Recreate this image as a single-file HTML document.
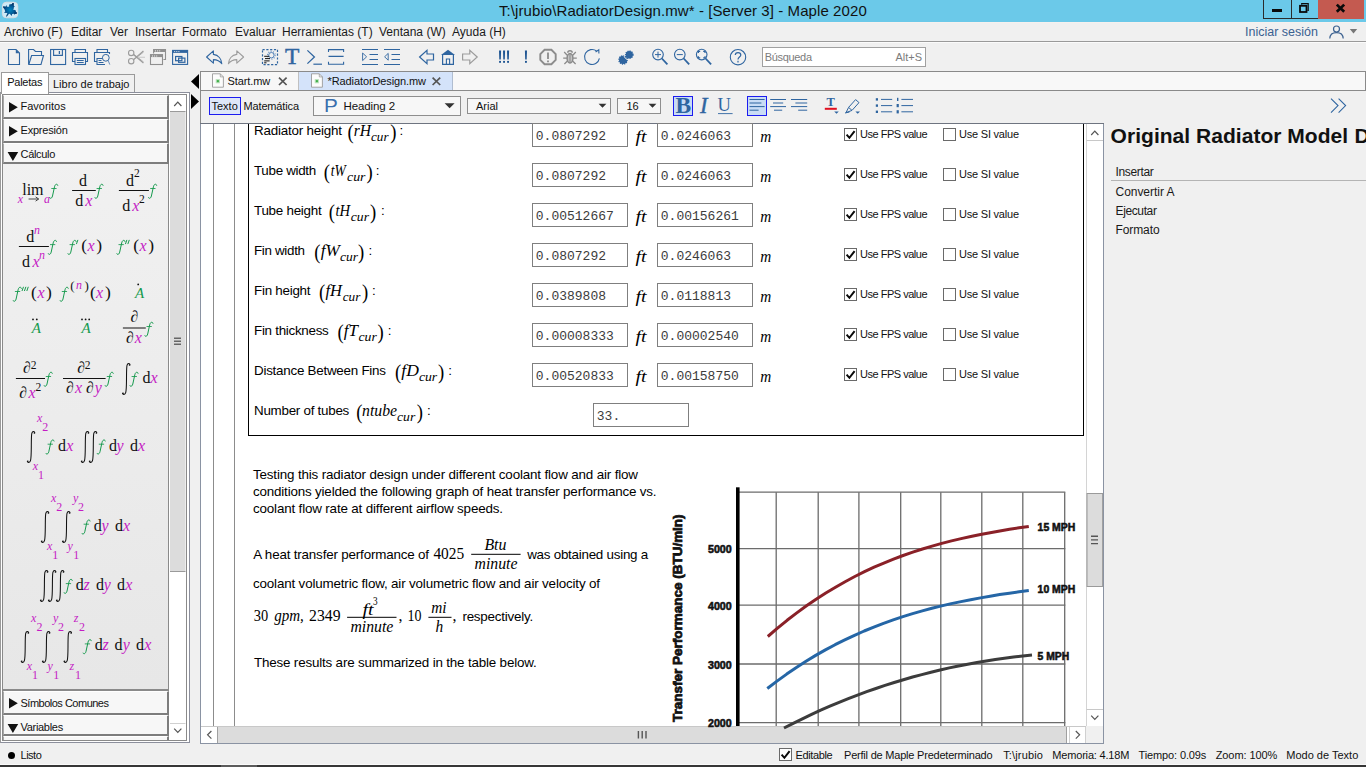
<!DOCTYPE html>
<html><head><meta charset="utf-8"><title>Maple 2020</title>
<style>
*{box-sizing:border-box;margin:0;padding:0}
html,body{width:1366px;height:767px;overflow:hidden;background:#f0f0f0;font-family:"Liberation Sans",sans-serif;}
#app{position:relative;width:1366px;height:767px;overflow:hidden;background:#f0f0f0}
.a{position:absolute}
.t{position:absolute;white-space:pre;line-height:1;color:#000}
.ui{font-size:12px;color:#1a1a1a}
svg{position:absolute;overflow:visible}
.ser{font-family:"Liberation Serif",serif}
.mono{font-family:"Liberation Mono",monospace}
.it{font-style:italic}
</style></head><body><div id="app">

<!-- TITLE BAR -->
<div class="a" id="titlebar" style="left:0;top:0;width:1366px;height:22px;background:#6bc9e9"></div>
<div class="t" style="left:499px;top:3px;font-size:15px;letter-spacing:0.08px;color:#111">T:\jrubio\RadiatorDesign.mw* - [Server 3] - Maple 2020</div>
<svg style="left:0;top:0" width="22" height="22" viewBox="0 0 22 22">
 <defs><radialGradient id="lg" cx="10" cy="10" r="7.5" gradientUnits="userSpaceOnUse"><stop offset="0" stop-color="#0086bf"/><stop offset="0.55" stop-color="#045a96"/><stop offset="1" stop-color="#00285a"/></radialGradient></defs>
 <rect x="2.4" y="2.2" width="15.4" height="15.6" rx="4" fill="#cdeaf7" stroke="#e3dcdc" stroke-width="0.8"/>
 <path d="M12.8 3.0 L13.8 3.0 L13.9 5.9 L14.9 6.4 L13.8 7.2 L13.8 8.6 L13.0 9.4 L15.6 10.2 L16.0 12.1 L17.1 12.5 L16.9 13.8 L15.0 14.1 L14.6 14.7 L13.8 13.8 L12.1 14.1 L11.7 16.0 L10.6 14.7 L9.9 13.8 L8.8 14.1 L6.7 16.7 L6.1 16.3 L7.4 13.1 L4.1 12.7 L4.7 12.1 L5.3 11.6 L4.4 9.1 L3.1 7.5 L3.1 6.3 L5.8 6.6 L6.3 5.0 L7.0 6.7 L9.1 6.7 L9.2 4.4 L12.1 4.1 L12.2 3.1 Z" fill="url(#lg)"/>
</svg>
<!-- window buttons -->
<div class="a" style="left:1263px;top:0;width:29px;height:19px;border:1px solid #2b2b2b;border-top:none;background:#6bc9e9"></div>
<div class="a" style="left:1291px;top:0;width:27px;height:19px;border:1px solid #2b2b2b;border-top:none;border-right:none;background:#6bc9e9"></div>
<div class="a" style="left:1317.5px;top:0;width:46.5px;height:18.6px;background:#c45a50"></div>

<!-- MENU BAR -->
<div class="a" style="left:0;top:22px;width:1366px;height:19px;background:#f0f0f0;border-top:1px solid #f6f1ef"></div>
<div class="a" style="left:0;top:41px;width:1366px;height:1px;background:#9a9a9a"></div>
<div class="a" style="left:0;top:42px;width:1366px;height:1px;background:#fbfbfb"></div>
<!-- menus -->
<div class="t ui" style="left:4px;top:26px">Archivo (F)</div>
<div class="t ui" style="left:71px;top:26px">Editar</div>
<div class="t ui" style="left:110px;top:26px">Ver</div>
<div class="t ui" style="left:135px;top:26px">Insertar</div>
<div class="t ui" style="left:182px;top:26px">Formato</div>
<div class="t ui" style="left:235px;top:26px">Evaluar</div>
<div class="t ui" style="left:282px;top:26px">Herramientas (T)</div>
<div class="t ui" style="left:379px;top:26px">Ventana (W)</div>
<div class="t ui" style="left:452px;top:26px">Ayuda (H)</div>
<div class="t" style="left:1245px;top:26px;font-size:12.5px;color:#3b6190">Iniciar sesión</div>
<svg style="left:1326px;top:24px" width="36" height="16" viewBox="1326 24 36 16">
 <circle cx="1336.5" cy="29" r="3" fill="none" stroke="#3b6190" stroke-width="1.2"/>
 <path d="M1329.8 38.5 C1330 33.5 1333.5 32.6 1336.5 32.6 C1339.5 32.6 1343 33.5 1343.2 38.5" fill="none" stroke="#3b6190" stroke-width="1.2"/>
 <path d="M1349.8 29 H1357.2 L1353.5 33.6 Z" fill="#777"/>
</svg>
<!-- window control glyphs -->
<div class="a" style="left:1272px;top:8.8px;width:10.2px;height:3.2px;background:#0a0a0a"></div>
<svg style="left:1297px;top:2px" width="16" height="13" viewBox="1297 2 16 13">
 <path d="M1301.7 4.8 V3.7 H1308.2 V10.4 H1307.4" fill="none" stroke="#0a0a0a" stroke-width="1.2"/>
 <rect x="1300" y="5.8" width="6.5" height="6.2" fill="none" stroke="#0a0a0a" stroke-width="1.8"/>
</svg>
<svg style="left:1334px;top:3px" width="14" height="11" viewBox="1334 3 14 11">
 <path d="M1336.8 4.6 L1344.2 11.8 M1344.2 4.6 L1336.8 11.8" stroke="#0a0a0a" stroke-width="2.7" fill="none"/>
</svg>
<!-- toolbar -->
<svg style="left:0;top:44px" width="1366" height="27" viewBox="0 44 1366 27" fill="none" stroke="#2f65a0" stroke-width="1.1">
 <!-- new -->
 <path d="M8.5 49.5 H16 L19.5 53 V64.5 H8.5 Z"/><path d="M15.8 49.5 L19.5 53.2 H15.8 Z" fill="#2f65a0" stroke="none"/>
 <!-- open -->
 <path d="M28.6 64 V49.5 H33.5 L35.5 51.5 H41.5 V55.2"/><path d="M28.8 64.5 L31.6 55.5 H43.5 L41 64.5 Z"/>
 <!-- save -->
 <rect x="50.6" y="49.5" width="15" height="15"/><path d="M53.6 49.5 V55.4 H62.4 V49.5"/><path d="M59.4 51 V54" stroke-width="1.3"/>
 <!-- print -->
 <path d="M75 52.5 V49.5 H85.5 V52.5"/><path d="M75 61.5 H72.5 V52.5 H87.5 V61.5 H85.5"/><rect x="75" y="58.5" width="10.5" height="6"/><path d="M76.8 60.5 H83.7 M76.8 62.5 H83.7" stroke-width="1"/>
 <!-- preview -->
 <path d="M97 52.5 V49.5 H107.5 V52.5"/><path d="M97 61.5 H94.5 V52.5 H109.5 V54"/><path d="M105 64.5 H97 V58.5 H102"/><path d="M98.5 60.5 H101.5 M98.5 62.5 H103.5" stroke-width="1"/>
 <circle cx="105.8" cy="57.8" r="3.4" fill="#f0f0f0" stroke-width="1"/><path d="M108.2 60.5 L109.8 64.6" stroke-width="1" stroke="#6a8fbd"/>
 <!-- cut (gray) -->
 <g stroke="#9c9c9c" stroke-width="1.1">
  <circle cx="131.2" cy="52.9" r="2.7"/><circle cx="131.2" cy="61.2" r="2.7"/>
  <path d="M133.4 54.5 L143.4 63 M133.4 59.6 L143.4 51"/><path d="M133.8 54.2 L143.6 62 M133.8 59.9 L143.6 52" stroke-width="0.7"/>
  <path d="M139.5 57.2 H144.5" stroke-dasharray="1 1"/>
 </g>
 <!-- copy (gray) -->
 <g stroke="#8f8f8f" stroke-width="1.1">
  <path d="M153.6 53.6 V49.6 H165.5 V59.5 H163.4"/><path d="M153.6 50.8 H165.5" stroke-width="2.4"/>
  <rect x="150.5" y="54.6" width="12" height="9.9"/><path d="M150.5 55.9 H162.5" stroke-width="2.4"/>
  <path d="M155 50.9 H160.4 M152 56 H157.4" stroke="#f0f0f0" stroke-width="1" stroke-dasharray="1 1.1"/>
 </g>
 <!-- paste -->
 <rect x="172.6" y="50.4" width="15" height="14"/><path d="M172.6 51.6 H187.6" stroke-width="2.6"/>
 <rect x="175.6" y="56.5" width="6.3" height="4.2" stroke-width="1.2"/><rect x="178.6" y="58.1" width="6.3" height="4.2" stroke-width="1.2"/>
 <path d="M174.2 51.6 H179.6" stroke="#f0f0f0" stroke-width="1" stroke-dasharray="1 1.1"/>
 <!-- undo -->
 <path d="M206.6 57 L213.4 50.8 V54.4 C218.5 55 221.5 59 221.8 63.8 C219.8 61 217.5 59.7 213.4 59.6 V63.2 Z" stroke-linejoin="round"/>
 <!-- redo gray -->
 <path d="M243.6 57 L236.8 50.8 V54.4 C231.7 55 228.7 59 228.4 63.8 C230.4 61 232.7 59.7 236.8 59.6 V63.2 Z" stroke="#9c9c9c" stroke-linejoin="round"/>
 <!-- exec group -->
 <rect x="262.5" y="49.6" width="15" height="15" stroke-dasharray="2.2 1.6" stroke-width="1.2"/>
 <circle cx="271.4" cy="55.2" r="2.7" stroke-width="1" stroke="#4f80b8"/><circle cx="271.4" cy="55.2" r="3.9" stroke-width="1.1" stroke="#5a88bd" stroke-dasharray="1 1.45"/>
 <path d="M264.2 56.3 H269.2 M265 58.6 H270 M264.2 60.9 H269.6 M264.2 62.8 H266.5" stroke="#111" stroke-width="1"/>
 <!-- >_ -->
 <path d="M307.4 50.4 L314.4 57 L307.4 63.6" stroke-width="1.3"/><path d="M313.4 64.2 H322" stroke-width="1.2"/>
 <!-- section -->
 <path d="M328.5 52 V49.6 H343.6 V52 M328.5 56.4 H343.6 M328.5 61.8 V64.2 H343.6 V61.8"/>
 <!-- indent -->
 <path d="M362 49.5 H378 M369.5 54.5 H378 M369.5 59.5 H378 M362 64.5 H378"/><path d="M362.6 53 L366.6 56.8 L362.6 60.6 Z" stroke-width="0.9"/>
 <!-- outdent -->
 <path d="M384 49.5 H400 M391.5 54.5 H400 M391.5 59.5 H400 M384 64.5 H400"/><path d="M388.2 53.4 L384.6 56.8 L388.2 60.2 Z" stroke-width="0.9"/>
 <!-- back -->
 <path d="M419.6 57 L427 50.4 V54 H433.5 V60 H427 V63.6 Z" stroke-width="1.2"/>
 <!-- home -->
 <path d="M441 55 L448 49.8 L455 55 Z" fill="#2f65a0" stroke="none"/><path d="M442.6 54.5 V64.4 H453.4 V54.5" stroke-width="1.2"/><path d="M446.4 64.4 V59 H449.6 V64.4" stroke-width="1.1"/>
 <!-- forward gray -->
 <path d="M477.2 57 L469.8 50.4 V54 H462.6 V60 H469.8 V63.6 Z" stroke="#9c9c9c" stroke-width="1.2"/>
 <!-- !!! -->
 <g fill="#1f5592" stroke="none">
  <path d="M499 50.6 h2.1 l-0.3 8.9 h-1.5 Z M503 50.6 h2.1 l-0.3 8.9 h-1.5 Z M507 50.6 h2.1 l-0.3 8.9 h-1.5 Z"/>
  <rect x="499.1" y="60.9" width="1.9" height="1.9"/><rect x="503.1" y="60.9" width="1.9" height="1.9"/><rect x="507.1" y="60.9" width="1.9" height="1.9"/>
  <path d="M524.9 50.6 h2.1 l-0.3 8.9 h-1.5 Z"/><rect x="525" y="60.9" width="1.9" height="1.9"/>
 </g>
 <!-- octagon -->
 <path d="M544.6 49.8 H551.4 L555.7 54.2 V59.8 L551.4 64.2 H544.6 L540.3 59.8 V54.2 Z" stroke="#8c8c8c" stroke-width="1.9"/>
 <path d="M548 52.6 V59 M548 60.4 V62.2" stroke="#8c8c8c" stroke-width="1.8"/>
 <!-- bug -->
 <g stroke="#8a8a8a" stroke-width="1.25">
  <ellipse cx="570" cy="58.2" rx="2.9" ry="4.7" stroke-width="1.5" fill="#c4c4c4"/><path d="M570 54 V62.6" stroke-width="1"/>
  <path d="M567.8 52.8 C567.8 50 572.2 50 572.2 52.8" stroke-width="1.5"/>
  <path d="M567.2 55.2 L564.2 52 M572.8 55.2 L575.8 52 M566.9 58.2 H563.2 M573.1 58.2 H576.8 M567.4 61 L564.4 64 M572.6 61 L575.6 64"/>
 </g>
 <!-- refresh -->
 <path d="M596.6 51 A7.5 7.5 0 1 0 599.4 58.4" stroke-width="1.1"/><path d="M595.6 52 L598.8 49.7 L598.9 53.4" stroke-width="1.1"/>
 <!-- gears -->
 <circle cx="623.1" cy="59.9" r="4.1" fill="#2f65a0" stroke="#2f65a0" stroke-width="1.5" stroke-dasharray="1.1 1"/>
 <circle cx="629.3" cy="54.7" r="5.3" fill="none" stroke="#f0f0f0" stroke-width="1"/>
 <circle cx="629.3" cy="54.7" r="3.6" fill="#2f65a0" stroke="#2f65a0" stroke-width="1.5" stroke-dasharray="1.1 1"/>
 <!-- zoom in -->
 <circle cx="658" cy="54.6" r="5.3"/><path d="M661.9 58.5 L667.4 64.4" stroke-width="1.8"/><path d="M655 54.6 H661 M658 51.6 V57.6" stroke-width="1"/>
 <!-- zoom out -->
 <circle cx="679.8" cy="54.6" r="5.3"/><path d="M683.7 58.5 L689.2 64.4" stroke-width="1.8"/><path d="M676.8 54.6 H682.8" stroke-width="1"/>
 <!-- zoom fit -->
 <circle cx="701.7" cy="54.6" r="5.3"/><path d="M705.6 58.5 L711.1 64.4" stroke-width="1.8"/>
 <path d="M698.4 53 V51.4 H700.2 M703.2 51.4 H705 V53 M698.4 56.2 V57.8 H700.2 M703.2 57.8 H705 V56.2" stroke-width="1.2"/>
 <!-- help -->
 <circle cx="738" cy="57.2" r="7.7"/>
 <path d="M735.3 55 C735.3 51.8 740.8 51.8 740.8 55 C740.8 57 738 57.2 738 59.4 M738 60.8 V62.4" stroke-width="1.2"/>
</svg>
<div class="t ser" style="left:284.6px;top:46px;font-size:22.8px;color:#2f65a0;-webkit-text-stroke:0.45px #2f65a0;transform:scaleX(1.03);transform-origin:0 0">T</div>
<!-- search box -->
<div class="a" style="left:762px;top:47px;width:164px;height:20px;background:#fff;border:1px solid #a0a0a0"></div>
<div class="t" style="left:764.8px;top:51.6px;font-size:11px;color:#7c7c7c;letter-spacing:-0.33px">Búsqueda</div>
<div class="t" style="left:895.5px;top:51.6px;font-size:11px;color:#7c7c7c">Alt+S</div>
<!-- LEFT PANEL -->
<!-- tabs -->
<div class="a" style="left:48px;top:74px;width:87px;height:19px;background:#f0f0f0;border:1px solid #9a9a9a;border-bottom:none"></div>
<div class="a" style="left:0;top:92px;width:190px;height:651px;border:1px solid #8c8f9c;border-left:1px solid #9a9a9a;background:#fff"></div>
<div class="a" style="left:1px;top:72px;width:48px;height:22px;background:#fff;border:1px solid #9a9a9a;border-bottom:none"></div>
<div class="t" style="left:7.2px;top:77px;font-size:11px;letter-spacing:-0.25px;color:#111">Paletas</div>
<div class="t" style="left:53px;top:79.3px;font-size:11px;color:#111">Libro de trabajo</div>
<!-- inner frame -->
<div class="a" style="left:2px;top:94px;width:185px;height:647px;border:1px solid #8a8a8a;background:#fff;overflow:hidden"></div>
<!-- palette content -->
<div class="a" style="left:3px;top:95px;width:166px;height:645px;background:linear-gradient(#f2f2f2,#e6e6e6);border-right:1px solid #8a8a8a"></div>
<!-- headers -->
<div class="a ph" style="top:95px"></div>
<div class="a ph" style="top:119px"></div>
<div class="a ph" style="top:143px;height:21px"></div>
<div class="a ph" style="top:691px"></div>
<div class="a ph" style="top:715px;height:21px"></div>
<div class="a ph" style="top:736px;height:4px;border-bottom:none"></div>
<style>.ph{left:3px;width:166px;height:24px;background:#f7f7f7;border:1px solid #fff;border-right:2px solid #7d7d7d;border-bottom:2px solid #7d7d7d;border-left:1px solid #a8a8a8}
.pt{font-size:11px;color:#111}</style>
<div class="a" style="left:3px;top:689px;width:166px;height:2px;background:#8a8a8a"></div>
<svg style="left:0;top:90px" width="200" height="660" viewBox="0 90 200 660">
 <path d="M9 102 L17.8 107.3 L9 112.6 Z M9 126 L17.8 131.3 L9 136.6 Z M9 698 L17.8 703.3 L9 708.6 Z" fill="#111"/>
 <path d="M7.6 152 H18.2 L12.9 161 Z M7.6 724 H18.2 L12.9 733 Z" fill="#111"/>
 <!-- scrollbar -->
 <rect x="170" y="95" width="16" height="645" fill="#fff"/>
 <rect x="170" y="111.5" width="15.5" height="460" fill="#dcdcdc"/>
 <path d="M170 111.5 H185.5 M170 571.5 H185.5" stroke="#9a9a9a" stroke-width="1"/>
 <path d="M174 338.2 H181 M174 341.2 H181 M174 344.2 H181" stroke="#666" stroke-width="1.4"/>
 <path d="M174.2 106 L177.8 102.2 L181.4 106" fill="none" stroke="#555" stroke-width="1.2"/>
 <path d="M174.2 728.6 L177.8 732.4 L181.4 728.6" fill="none" stroke="#555" stroke-width="1.2"/>
 <path d="M170 723.5 H185.5" stroke="#d0d0d0" stroke-width="1"/>
 <!-- collapse arrows -->
 <path d="M191 81.5 L199 74 V89 Z" fill="#000"/>
 <path d="M199 101.5 L191 94 V109 Z" fill="#000"/>
</svg>
<div class="t pt" style="left:20.5px;top:101.3px">Favoritos</div>
<div class="t pt" style="left:20.5px;top:125.3px;letter-spacing:-0.2px">Expresión</div>
<div class="t pt" style="left:20.5px;top:149.3px;letter-spacing:-0.3px">Cálculo</div>
<div class="t pt" style="left:20.5px;top:698.3px;letter-spacing:-0.5px">Símbolos Comunes</div>
<div class="t pt" style="left:20.5px;top:722.2px;letter-spacing:-0.3px">Variables</div>
<!-- PALETTE MATH -->
<svg style="left:0;top:164px" width="169" height="526" viewBox="0 164 169 526" font-family="Liberation Serif">
<text x="22.2" y="194.6" font-size="16" fill="#111">lim</text>
<text x="17.7" y="202.5" font-size="12" font-style="italic" fill="#c41cc4">x</text>
<path d="M28.6 199 H38.4 M35.6 196.9 L38.7 199 L35.6 201.1" fill="none" stroke="#333" stroke-width="0.9"/>
<text x="43.9" y="202.5" font-size="12" font-style="italic" fill="#c41cc4">a</text>
<g transform="translate(49.3 195.0)" fill="none" stroke="#159a4d" stroke-linecap="round"><path d="M8.5 -9.7 C8.3 -11.3 5.9 -11.5 5.2 -8.2 L3.2 1 C2.6 3.7 0.6 3.9 0.3 2.7" stroke-width="1.0"/><path d="M2.4 -6.5 H6.9" stroke-width="0.85"/></g>
<text x="79.1" y="185.5" font-size="16" fill="#111">d</text>
<path d="M72.1 190.5 H95.8" stroke="#111" stroke-width="1"/>
<text x="75.2" y="205.7" font-size="16" fill="#111">d</text>
<text x="85.2" y="205.7" font-size="16" font-style="italic" fill="#c41cc4">x</text>
<g transform="translate(94.6 195.0)" fill="none" stroke="#159a4d" stroke-linecap="round"><path d="M8.5 -9.7 C8.3 -11.3 5.9 -11.5 5.2 -8.2 L3.2 1 C2.6 3.7 0.6 3.9 0.3 2.7" stroke-width="1.0"/><path d="M2.4 -6.5 H6.9" stroke-width="0.85"/></g>
<text x="126.1" y="185.5" font-size="16" fill="#111">d</text>
<text x="134.0" y="176.6" font-size="11.5" fill="#111">2</text>
<path d="M118.9 190.5 H148.9" stroke="#111" stroke-width="1"/>
<text x="122.2" y="210.7" font-size="16" fill="#111">d</text>
<text x="132.2" y="210.7" font-size="16" font-style="italic" fill="#c41cc4">x</text>
<text x="139.1" y="203.2" font-size="11.5" fill="#111">2</text>
<g transform="translate(148.2 195.0)" fill="none" stroke="#159a4d" stroke-linecap="round"><path d="M8.5 -9.7 C8.3 -11.3 5.9 -11.5 5.2 -8.2 L3.2 1 C2.6 3.7 0.6 3.9 0.3 2.7" stroke-width="1.0"/><path d="M2.4 -6.5 H6.9" stroke-width="0.85"/></g>
<text x="26.3" y="241.5" font-size="16" fill="#111">d</text>
<text x="34.1" y="233.7" font-size="12" font-style="italic" fill="#c41cc4">n</text>
<path d="M18.9 246.5 H48.9" stroke="#111" stroke-width="1"/>
<text x="22.0" y="266.7" font-size="16" fill="#111">d</text>
<text x="32.4" y="266.7" font-size="16" font-style="italic" fill="#c41cc4">x</text>
<text x="39.0" y="259.1" font-size="12" font-style="italic" fill="#c41cc4">n</text>
<g transform="translate(48.0 251.1)" fill="none" stroke="#159a4d" stroke-linecap="round"><path d="M8.5 -9.7 C8.3 -11.3 5.9 -11.5 5.2 -8.2 L3.2 1 C2.6 3.7 0.6 3.9 0.3 2.7" stroke-width="1.0"/><path d="M2.4 -6.5 H6.9" stroke-width="0.85"/></g>
<g transform="translate(67.6 251.1)" fill="none" stroke="#159a4d" stroke-linecap="round"><path d="M8.5 -9.7 C8.3 -11.3 5.9 -11.5 5.2 -8.2 L3.2 1 C2.6 3.7 0.6 3.9 0.3 2.7" stroke-width="1.0"/><path d="M2.4 -6.5 H6.9" stroke-width="0.85"/></g>
<path d="M77.9 239.9 L76.4 244.1" stroke="#159a4d" stroke-width="1" fill="none"/>
<text x="81.2" y="251.4" font-size="17.5" fill="#111">(</text>
<text x="87.6" y="250.8" font-size="16" font-style="italic" fill="#c41cc4">x</text>
<text x="96.2" y="251.4" font-size="17.5" fill="#111">)</text>
<g transform="translate(116.5 251.1)" fill="none" stroke="#159a4d" stroke-linecap="round"><path d="M8.5 -9.7 C8.3 -11.3 5.9 -11.5 5.2 -8.2 L3.2 1 C2.6 3.7 0.6 3.9 0.3 2.7" stroke-width="1.0"/><path d="M2.4 -6.5 H6.9" stroke-width="0.85"/></g>
<path d="M126.9 239.9 L125.4 244.1" stroke="#159a4d" stroke-width="1" fill="none"/>
<path d="M129.3 239.9 L127.8 244.1" stroke="#159a4d" stroke-width="1" fill="none"/>
<text x="133.3" y="251.4" font-size="17.5" fill="#111">(</text>
<text x="139.4" y="250.8" font-size="16" font-style="italic" fill="#c41cc4">x</text>
<text x="148.3" y="251.4" font-size="17.5" fill="#111">)</text>
<g transform="translate(12.9 298.0)" fill="none" stroke="#159a4d" stroke-linecap="round"><path d="M8.5 -9.7 C8.3 -11.3 5.9 -11.5 5.2 -8.2 L3.2 1 C2.6 3.7 0.6 3.9 0.3 2.7" stroke-width="1.0"/><path d="M2.4 -6.5 H6.9" stroke-width="0.85"/></g>
<path d="M23.5 286.8 L22.0 291.0" stroke="#159a4d" stroke-width="1" fill="none"/>
<path d="M25.9 286.8 L24.4 291.0" stroke="#159a4d" stroke-width="1" fill="none"/>
<path d="M28.3 286.8 L26.8 291.0" stroke="#159a4d" stroke-width="1" fill="none"/>
<text x="31.0" y="298.4" font-size="17.5" fill="#111">(</text>
<text x="37.4" y="297.8" font-size="16" font-style="italic" fill="#c41cc4">x</text>
<text x="46.0" y="298.4" font-size="17.5" fill="#111">)</text>
<g transform="translate(59.8 298.0)" fill="none" stroke="#159a4d" stroke-linecap="round"><path d="M8.5 -9.7 C8.3 -11.3 5.9 -11.5 5.2 -8.2 L3.2 1 C2.6 3.7 0.6 3.9 0.3 2.7" stroke-width="1.0"/><path d="M2.4 -6.5 H6.9" stroke-width="0.85"/></g>
<text x="70.3" y="290.4" font-size="13" fill="#111">(</text>
<text x="76.1" y="289.4" font-size="12" font-style="italic" fill="#c41cc4">n</text>
<text x="84.5" y="290.4" font-size="13" fill="#111">)</text>
<text x="89.9" y="298.4" font-size="17.5" fill="#111">(</text>
<text x="96.1" y="297.8" font-size="16" font-style="italic" fill="#c41cc4">x</text>
<text x="105.0" y="298.4" font-size="17.5" fill="#111">)</text>
<text x="135.1" y="297.8" font-size="15" font-style="italic" fill="#159a4d">A</text>
<circle cx="138.2" cy="284.4" r="0.9" fill="#111"/>
<text x="31.8" y="332.6" font-size="15" font-style="italic" fill="#159a4d">A</text>
<circle cx="33" cy="319.4" r="0.9" fill="#111"/><circle cx="36.8" cy="319.4" r="0.9" fill="#111"/>
<text x="81.5" y="332.6" font-size="15" font-style="italic" fill="#159a4d">A</text>
<circle cx="82" cy="319.4" r="0.9" fill="#111"/><circle cx="85.6" cy="319.4" r="0.9" fill="#111"/><circle cx="89.2" cy="319.4" r="0.9" fill="#111"/>
<text x="130.4" y="321.5" font-size="16" fill="#111">∂</text>
<path d="M122.9 328.0 H145.8" stroke="#111" stroke-width="1"/>
<text x="126.1" y="343.4" font-size="16" fill="#111">∂</text>
<text x="134.8" y="343.4" font-size="16" font-style="italic" fill="#c41cc4">x</text>
<g transform="translate(144.5 333.0)" fill="none" stroke="#159a4d" stroke-linecap="round"><path d="M8.5 -9.7 C8.3 -11.3 5.9 -11.5 5.2 -8.2 L3.2 1 C2.6 3.7 0.6 3.9 0.3 2.7" stroke-width="1.0"/><path d="M2.4 -6.5 H6.9" stroke-width="0.85"/></g>
<text x="23.1" y="373.4" font-size="16" fill="#111">∂</text>
<text x="30.7" y="368.5" font-size="11.5" fill="#111">2</text>
<path d="M15.9 378.5 H45.0" stroke="#111" stroke-width="1"/>
<text x="19.2" y="397.8" font-size="16" fill="#111">∂</text>
<text x="28.5" y="397.8" font-size="16" font-style="italic" fill="#c41cc4">x</text>
<text x="35.4" y="391.4" font-size="11.5" fill="#111">2</text>
<g transform="translate(43.8 383.0)" fill="none" stroke="#159a4d" stroke-linecap="round"><path d="M8.5 -9.7 C8.3 -11.3 5.9 -11.5 5.2 -8.2 L3.2 1 C2.6 3.7 0.6 3.9 0.3 2.7" stroke-width="1.0"/><path d="M2.4 -6.5 H6.9" stroke-width="0.85"/></g>
<text x="77.2" y="373.4" font-size="16" fill="#111">∂</text>
<text x="84.7" y="368.5" font-size="11.5" fill="#111">2</text>
<path d="M63.0 378.5 H105.6" stroke="#111" stroke-width="1"/>
<text x="66.1" y="393.2" font-size="16" fill="#111">∂</text>
<text x="75.1" y="393.2" font-size="16" font-style="italic" fill="#c41cc4">x</text>
<text x="86.0" y="393.2" font-size="16" fill="#111">∂</text>
<text x="94.8" y="393.2" font-size="16" font-style="italic" fill="#c41cc4">y</text>
<g transform="translate(104.8 383.0)" fill="none" stroke="#159a4d" stroke-linecap="round"><path d="M8.5 -9.7 C8.3 -11.3 5.9 -11.5 5.2 -8.2 L3.2 1 C2.6 3.7 0.6 3.9 0.3 2.7" stroke-width="1.0"/><path d="M2.4 -6.5 H6.9" stroke-width="0.85"/></g>
<path transform="translate(122.3 363.0)" d="M7.7 1.9 C7.5 0.1 5.3 -0.1 4.7 2.4 C4.2 4.6 4.25 9 4.2 16 C4.15 23 4.1 27.4 3.4 29.6 C2.7 32 0.5 32 0.2 30.2" fill="none" stroke="#111" stroke-width="1.05" stroke-linecap="round"/>
<circle cx="129.5" cy="364.9" r="0.75" fill="#111"/><circle cx="123.1" cy="393.2" r="0.75" fill="#111"/>
<g transform="translate(129.6 383.0)" fill="none" stroke="#159a4d" stroke-linecap="round"><path d="M8.5 -9.7 C8.3 -11.3 5.9 -11.5 5.2 -8.2 L3.2 1 C2.6 3.7 0.6 3.9 0.3 2.7" stroke-width="1.0"/><path d="M2.4 -6.5 H6.9" stroke-width="0.85"/></g>
<text x="142.4" y="382.8" font-size="16" fill="#111">d</text>
<text x="150.5" y="382.8" font-size="16" font-style="italic" fill="#c41cc4">x</text>
<path transform="translate(27.1 431.0)" d="M7.7 1.9 C7.5 0.1 5.3 -0.1 4.7 2.4 C4.2 4.6 4.25 9 4.2 16 C4.15 23 4.1 27.4 3.4 29.6 C2.7 32 0.5 32 0.2 30.2" fill="none" stroke="#111" stroke-width="1.05" stroke-linecap="round"/>
<circle cx="34.3" cy="432.9" r="0.75" fill="#111"/><circle cx="27.9" cy="461.2" r="0.75" fill="#111"/>
<text x="36.9" y="421.5" font-size="12" font-style="italic" fill="#c41cc4">x</text>
<text x="42.3" y="430.6" font-size="12" fill="#c41cc4">2</text>
<text x="32.7" y="469.8" font-size="12" font-style="italic" fill="#c41cc4">x</text>
<text x="38.1" y="478.6" font-size="12" fill="#c41cc4">1</text>
<g transform="translate(45.6 450.7)" fill="none" stroke="#159a4d" stroke-linecap="round"><path d="M8.5 -9.7 C8.3 -11.3 5.9 -11.5 5.2 -8.2 L3.2 1 C2.6 3.7 0.6 3.9 0.3 2.7" stroke-width="1.0"/><path d="M2.4 -6.5 H6.9" stroke-width="0.85"/></g>
<text x="57.9" y="450.6" font-size="16" fill="#111">d</text>
<text x="66.3" y="450.6" font-size="16" font-style="italic" fill="#c41cc4">x</text>
<path transform="translate(81.1 431.0)" d="M7.7 1.9 C7.5 0.1 5.3 -0.1 4.7 2.4 C4.2 4.6 4.25 9 4.2 16 C4.15 23 4.1 27.4 3.4 29.6 C2.7 32 0.5 32 0.2 30.2" fill="none" stroke="#111" stroke-width="1.05" stroke-linecap="round"/>
<circle cx="88.3" cy="432.9" r="0.75" fill="#111"/><circle cx="81.9" cy="461.2" r="0.75" fill="#111"/>
<path transform="translate(89.1 431.0)" d="M7.7 1.9 C7.5 0.1 5.3 -0.1 4.7 2.4 C4.2 4.6 4.25 9 4.2 16 C4.15 23 4.1 27.4 3.4 29.6 C2.7 32 0.5 32 0.2 30.2" fill="none" stroke="#111" stroke-width="1.05" stroke-linecap="round"/>
<circle cx="96.3" cy="432.9" r="0.75" fill="#111"/><circle cx="89.9" cy="461.2" r="0.75" fill="#111"/>
<g transform="translate(96.8 450.7)" fill="none" stroke="#159a4d" stroke-linecap="round"><path d="M8.5 -9.7 C8.3 -11.3 5.9 -11.5 5.2 -8.2 L3.2 1 C2.6 3.7 0.6 3.9 0.3 2.7" stroke-width="1.0"/><path d="M2.4 -6.5 H6.9" stroke-width="0.85"/></g>
<text x="108.9" y="450.6" font-size="16" fill="#111">d</text>
<text x="116.5" y="450.6" font-size="16" font-style="italic" fill="#c41cc4">y</text>
<text x="130.0" y="450.6" font-size="16" fill="#111">d</text>
<text x="138.0" y="450.6" font-size="16" font-style="italic" fill="#c41cc4">x</text>
<path transform="translate(41.1 511.0)" d="M7.7 1.9 C7.5 0.1 5.3 -0.1 4.7 2.4 C4.2 4.6 4.25 9 4.2 16 C4.15 23 4.1 27.4 3.4 29.6 C2.7 32 0.5 32 0.2 30.2" fill="none" stroke="#111" stroke-width="1.05" stroke-linecap="round"/>
<circle cx="48.3" cy="512.9" r="0.75" fill="#111"/><circle cx="41.9" cy="541.2" r="0.75" fill="#111"/>
<text x="51.0" y="501.5" font-size="12" font-style="italic" fill="#c41cc4">x</text>
<text x="56.2" y="510.6" font-size="12" fill="#c41cc4">2</text>
<text x="47.1" y="549.8" font-size="12" font-style="italic" fill="#c41cc4">x</text>
<text x="52.2" y="558.6" font-size="12" fill="#c41cc4">1</text>
<path transform="translate(62.3 511.0)" d="M7.7 1.9 C7.5 0.1 5.3 -0.1 4.7 2.4 C4.2 4.6 4.25 9 4.2 16 C4.15 23 4.1 27.4 3.4 29.6 C2.7 32 0.5 32 0.2 30.2" fill="none" stroke="#111" stroke-width="1.05" stroke-linecap="round"/>
<circle cx="69.5" cy="512.9" r="0.75" fill="#111"/><circle cx="63.1" cy="541.2" r="0.75" fill="#111"/>
<text x="73.0" y="501.5" font-size="12" font-style="italic" fill="#c41cc4">y</text>
<text x="78.1" y="510.6" font-size="12" fill="#c41cc4">2</text>
<text x="67.5" y="549.8" font-size="12" font-style="italic" fill="#c41cc4">y</text>
<text x="73.3" y="558.6" font-size="12" fill="#c41cc4">1</text>
<g transform="translate(81.6 530.7)" fill="none" stroke="#159a4d" stroke-linecap="round"><path d="M8.5 -9.7 C8.3 -11.3 5.9 -11.5 5.2 -8.2 L3.2 1 C2.6 3.7 0.6 3.9 0.3 2.7" stroke-width="1.0"/><path d="M2.4 -6.5 H6.9" stroke-width="0.85"/></g>
<text x="93.7" y="530.6" font-size="16" fill="#111">d</text>
<text x="101.5" y="530.6" font-size="16" font-style="italic" fill="#c41cc4">y</text>
<text x="115.0" y="530.6" font-size="16" fill="#111">d</text>
<text x="123.1" y="530.6" font-size="16" font-style="italic" fill="#c41cc4">x</text>
<path transform="translate(40.2 570.0)" d="M7.7 1.9 C7.5 0.1 5.3 -0.1 4.7 2.4 C4.2 4.6 4.25 9 4.2 16 C4.15 23 4.1 27.4 3.4 29.6 C2.7 32 0.5 32 0.2 30.2" fill="none" stroke="#111" stroke-width="1.05" stroke-linecap="round"/>
<circle cx="47.4" cy="571.9" r="0.75" fill="#111"/><circle cx="41.0" cy="600.2" r="0.75" fill="#111"/>
<path transform="translate(48.2 570.0)" d="M7.7 1.9 C7.5 0.1 5.3 -0.1 4.7 2.4 C4.2 4.6 4.25 9 4.2 16 C4.15 23 4.1 27.4 3.4 29.6 C2.7 32 0.5 32 0.2 30.2" fill="none" stroke="#111" stroke-width="1.05" stroke-linecap="round"/>
<circle cx="55.4" cy="571.9" r="0.75" fill="#111"/><circle cx="49.0" cy="600.2" r="0.75" fill="#111"/>
<path transform="translate(56.2 570.0)" d="M7.7 1.9 C7.5 0.1 5.3 -0.1 4.7 2.4 C4.2 4.6 4.25 9 4.2 16 C4.15 23 4.1 27.4 3.4 29.6 C2.7 32 0.5 32 0.2 30.2" fill="none" stroke="#111" stroke-width="1.05" stroke-linecap="round"/>
<circle cx="63.4" cy="571.9" r="0.75" fill="#111"/><circle cx="57.0" cy="600.2" r="0.75" fill="#111"/>
<g transform="translate(63.8 590.1)" fill="none" stroke="#159a4d" stroke-linecap="round"><path d="M8.5 -9.7 C8.3 -11.3 5.9 -11.5 5.2 -8.2 L3.2 1 C2.6 3.7 0.6 3.9 0.3 2.7" stroke-width="1.0"/><path d="M2.4 -6.5 H6.9" stroke-width="0.85"/></g>
<text x="75.8" y="590.1" font-size="16" fill="#111">d</text>
<text x="83.6" y="590.1" font-size="16" font-style="italic" fill="#c41cc4">z</text>
<text x="96.0" y="590.1" font-size="16" fill="#111">d</text>
<text x="103.8" y="590.1" font-size="16" font-style="italic" fill="#c41cc4">y</text>
<text x="117.0" y="590.1" font-size="16" fill="#111">d</text>
<text x="125.3" y="590.1" font-size="16" font-style="italic" fill="#c41cc4">x</text>
<path transform="translate(21.0 631.0)" d="M7.7 1.9 C7.5 0.1 5.3 -0.1 4.7 2.4 C4.2 4.6 4.25 9 4.2 16 C4.15 23 4.1 27.4 3.4 29.6 C2.7 32 0.5 32 0.2 30.2" fill="none" stroke="#111" stroke-width="1.05" stroke-linecap="round"/>
<circle cx="28.2" cy="632.9" r="0.75" fill="#111"/><circle cx="21.8" cy="661.2" r="0.75" fill="#111"/>
<text x="31.0" y="621.6" font-size="12" font-style="italic" fill="#c41cc4">x</text>
<text x="36.4" y="630.9" font-size="12" fill="#c41cc4">2</text>
<text x="26.7" y="669.8" font-size="12" font-style="italic" fill="#c41cc4">x</text>
<text x="32.0" y="678.8" font-size="12" fill="#c41cc4">1</text>
<path transform="translate(42.2 631.0)" d="M7.7 1.9 C7.5 0.1 5.3 -0.1 4.7 2.4 C4.2 4.6 4.25 9 4.2 16 C4.15 23 4.1 27.4 3.4 29.6 C2.7 32 0.5 32 0.2 30.2" fill="none" stroke="#111" stroke-width="1.05" stroke-linecap="round"/>
<circle cx="49.4" cy="632.9" r="0.75" fill="#111"/><circle cx="43.0" cy="661.2" r="0.75" fill="#111"/>
<text x="52.9" y="621.6" font-size="12" font-style="italic" fill="#c41cc4">y</text>
<text x="58.1" y="630.9" font-size="12" fill="#c41cc4">2</text>
<text x="47.4" y="669.8" font-size="12" font-style="italic" fill="#c41cc4">y</text>
<text x="53.2" y="678.8" font-size="12" fill="#c41cc4">1</text>
<path transform="translate(63.8 631.0)" d="M7.7 1.9 C7.5 0.1 5.3 -0.1 4.7 2.4 C4.2 4.6 4.25 9 4.2 16 C4.15 23 4.1 27.4 3.4 29.6 C2.7 32 0.5 32 0.2 30.2" fill="none" stroke="#111" stroke-width="1.05" stroke-linecap="round"/>
<circle cx="71.0" cy="632.9" r="0.75" fill="#111"/><circle cx="64.6" cy="661.2" r="0.75" fill="#111"/>
<text x="73.8" y="621.6" font-size="12" font-style="italic" fill="#c41cc4">z</text>
<text x="79.1" y="630.9" font-size="12" fill="#c41cc4">2</text>
<text x="69.5" y="669.8" font-size="12" font-style="italic" fill="#c41cc4">z</text>
<text x="75.1" y="678.8" font-size="12" fill="#c41cc4">1</text>
<g transform="translate(82.8 650.4)" fill="none" stroke="#159a4d" stroke-linecap="round"><path d="M8.5 -9.7 C8.3 -11.3 5.9 -11.5 5.2 -8.2 L3.2 1 C2.6 3.7 0.6 3.9 0.3 2.7" stroke-width="1.0"/><path d="M2.4 -6.5 H6.9" stroke-width="0.85"/></g>
<text x="94.8" y="650.4" font-size="16" fill="#111">d</text>
<text x="102.5" y="650.4" font-size="16" font-style="italic" fill="#c41cc4">z</text>
<text x="114.6" y="650.4" font-size="16" fill="#111">d</text>
<text x="122.7" y="650.4" font-size="16" font-style="italic" fill="#c41cc4">y</text>
<text x="135.9" y="650.4" font-size="16" fill="#111">d</text>
<text x="144.2" y="650.4" font-size="16" font-style="italic" fill="#c41cc4">x</text>
</svg>
<!-- DOC TABS -->
<div class="a" style="left:200px;top:71px;width:1166px;height:20px;background:#f8f8f8;border:1px solid #8a8a8a"></div>
<div class="a" style="left:201px;top:72px;width:98px;height:18px;background:#f7f7f7;border-right:1px solid #c0c0c0"></div>
<div class="a" style="left:299px;top:72px;width:154px;height:18px;background:#d4e3fa;border-right:1px solid #b0bdd0"></div>
<svg style="left:200px;top:72px" width="260" height="18" viewBox="200 72 260 18">
 <g id="dicon">
 <path d="M212.5 73.8 H220.3 L223.4 76.9 V87.2 H212.5 Z" fill="#fcfcfc" stroke="#9a9a9a" stroke-width="0.9"/>
 <path d="M220.3 73.8 V76.9 H223.4" fill="none" stroke="#9a9a9a" stroke-width="0.8"/>
 <rect x="216.2" y="79.6" width="3.2" height="3.2" fill="#3fae49" stroke="#bfe3c0" stroke-width="1"/>
 </g>
 <g transform="translate(99 0)">
 <path d="M212.5 73.8 H220.3 L223.4 76.9 V87.2 H212.5 Z" fill="#fcfcfc" stroke="#9a9a9a" stroke-width="0.9"/>
 <path d="M220.3 73.8 V76.9 H223.4" fill="none" stroke="#9a9a9a" stroke-width="0.8"/>
 <rect x="216.2" y="79.6" width="3.2" height="3.2" fill="#3fae49" stroke="#bfe3c0" stroke-width="1"/>
 </g>
 <path d="M279 77.6 L286.6 85 M286.6 77.6 L279 85" stroke="#555" stroke-width="1.7" fill="none"/>
 <path d="M432.6 77.6 L440.2 85 M440.2 77.6 L432.6 85" stroke="#555" stroke-width="1.7" fill="none"/>
</svg>
<div class="t" style="left:227.5px;top:75.5px;font-size:11px;color:#111;letter-spacing:-0.1px">Start.mw</div>
<div class="t" style="left:327.5px;top:75.5px;font-size:11px;color:#111;letter-spacing:-0.1px">*RadiatorDesign.mw</div>
<!-- CONTEXT BAR -->
<div class="a" style="left:200px;top:91px;width:1166px;height:33px;background:#f0f0f0;border-left:1px solid #8a8a8a"></div>
<div class="a" style="left:200px;top:123px;width:904px;height:1px;background:#6e7480"></div>
<div class="a" style="left:209px;top:97px;width:32px;height:18px;background:#dde7f8;border:1px solid #1c1cf0"></div>
<div class="t" style="left:211.5px;top:100.5px;font-size:11px;color:#111">Texto</div>
<div class="t" style="left:243.5px;top:100.5px;font-size:11px;color:#111;letter-spacing:-0.15px">Matemática</div>
<!-- dropdowns -->
<div class="a dd" style="left:313px;top:96px;width:148px;height:20px"></div>
<div class="a dd" style="left:467px;top:98px;width:144px;height:16px"></div>
<div class="a dd" style="left:617px;top:98px;width:44px;height:16px"></div>
<style>.dd{background:#f7f7f7;border:1px solid #8e8e8e}</style>
<div class="t" style="left:324px;top:97px;font-size:18.5px;color:#3a6fae;transform:scaleX(1.12);transform-origin:0 0">P</div>
<div class="t" style="left:343.5px;top:100.5px;font-size:11.5px;color:#111;letter-spacing:-0.1px">Heading 2</div>
<div class="t" style="left:476px;top:100.5px;font-size:11px;color:#111">Arial</div>
<div class="t" style="left:626.5px;top:100.5px;font-size:11px;color:#111">16</div>
<svg style="left:200px;top:90px" width="1166" height="34" viewBox="200 90 1166 34">
 <path d="M444.6 103.2 H454.6 L449.6 108.2 Z M598.6 103.8 H606.4 L602.5 107.8 Z M648.6 103.8 H656.4 L652.5 107.8 Z" fill="#333"/>
 <!-- B I U -->
 <rect x="673.5" y="96.5" width="19" height="19" fill="#c9dcf5" stroke="#1c1cf0"/>
 <rect x="747.5" y="96.5" width="19" height="19" fill="#c9dcf5" stroke="#1c1cf0"/>
 <g stroke="#2f65a0" stroke-width="1" fill="none">
  <path d="M749.5 99.5 H764.6 M749.5 103 H761.4 M749.5 106.6 H764.6 M749.5 110.2 H758.6"/>
  <path d="M770.2 99.5 H786 M773 103 H783.2 M770.2 106.6 H786 M774 110.2 H782.2"/>
  <path d="M791 99.5 H807.2 M795.4 103 H807.2 M791 106.6 H807.2 M798.2 110.2 H807.2"/>
  <!-- bullets -->
  <path d="M881 99.4 H892.2 M881 105.6 H892.2 M881 111.8 H892.2 M901.4 99.4 H913 M901.4 105.6 H913 M901.4 111.8 H913"/>
  <path d="M718 113.6 H732.6" stroke-width="0.9"/>
  <!-- highlighter -->
  <path d="M846 112.6 L848.6 107.4 L855.6 99.6 L859 102.6 L852 110.4 Z M848.6 107.4 L852 110.4 M845 113 L849.5 112" stroke-width="1"/>
  <!-- >> -->
  <path d="M1331 98.6 L1338 105.6 L1331 112.6 M1338.6 98.6 L1345.6 105.6 L1338.6 112.6" stroke-width="1.1"/>
 </g>
 <g fill="#2f65a0">
  <rect x="875.8" y="98.2" width="2.2" height="2.4"/><rect x="875.8" y="104.4" width="2.2" height="2.4"/><rect x="875.8" y="110.6" width="2.2" height="2.4"/>
  <rect x="897" y="97.8" width="1.4" height="3.2"/><rect x="896.6" y="104" width="2.2" height="3.2"/><rect x="896.6" y="110.2" width="2.2" height="3.2"/>
  <path d="M834.2 111.4 H838.8 L836.5 113.8 Z M855.4 111.4 H860 L857.7 113.8 Z"/>
 </g>
 <rect x="824.8" y="107.8" width="12" height="2" fill="#e01020"/>
</svg>
<div class="t ser" style="left:675.5px;top:93.8px;font-size:23.5px;font-weight:bold;color:#2f65a0">B</div>
<div class="t ser" style="left:700px;top:95px;font-size:22.5px;font-style:italic;color:#2f65a0;-webkit-text-stroke:0.4px #2f65a0">I</div>
<div class="t ser" style="left:717.5px;top:96.4px;font-size:18.5px;color:#2f65a0">U</div>
<div class="t ser" style="left:826.4px;top:96.2px;font-size:12.5px;font-weight:bold;color:#2f65a0">T</div>
<!-- DOCUMENT -->
<div class="a" style="left:200px;top:124px;width:904px;height:620px;background:#fff;border:1px solid #8a93a3;border-top:none"></div>
<div class="a" style="left:213px;top:124px;width:1px;height:602px;background:#8c8c8c"></div>
<div class="a" style="left:234px;top:124px;width:1px;height:602px;background:#8c8c8c"></div>
<div class="a" style="left:248px;top:110px;width:836px;height:326px;border:1px solid #000;clip-path:inset(14px 0 0 0)"></div>
<style>.ib{background:#fff;border:1px solid #7f7f7f}.cb{background:#fff;border:1px solid #6a6a6a;width:13px;height:13px}</style>
<div class="a ib" style="left:532px;top:123px;width:96px;height:24px"></div>
<div class="a ib" style="left:657px;top:123px;width:96px;height:24px"></div>
<div class="a cb" style="left:844px;top:128px"></div>
<div class="a cb" style="left:943px;top:128px"></div>
<div class="a ib" style="left:532px;top:163px;width:96px;height:24px"></div>
<div class="a ib" style="left:657px;top:163px;width:96px;height:24px"></div>
<div class="a cb" style="left:844px;top:168px"></div>
<div class="a cb" style="left:943px;top:168px"></div>
<div class="a ib" style="left:532px;top:203px;width:96px;height:24px"></div>
<div class="a ib" style="left:657px;top:203px;width:96px;height:24px"></div>
<div class="a cb" style="left:844px;top:208px"></div>
<div class="a cb" style="left:943px;top:208px"></div>
<div class="a ib" style="left:532px;top:243px;width:96px;height:24px"></div>
<div class="a ib" style="left:657px;top:243px;width:96px;height:24px"></div>
<div class="a cb" style="left:844px;top:248px"></div>
<div class="a cb" style="left:943px;top:248px"></div>
<div class="a ib" style="left:532px;top:283px;width:96px;height:24px"></div>
<div class="a ib" style="left:657px;top:283px;width:96px;height:24px"></div>
<div class="a cb" style="left:844px;top:288px"></div>
<div class="a cb" style="left:943px;top:288px"></div>
<div class="a ib" style="left:532px;top:323px;width:96px;height:24px"></div>
<div class="a ib" style="left:657px;top:323px;width:96px;height:24px"></div>
<div class="a cb" style="left:844px;top:328px"></div>
<div class="a cb" style="left:943px;top:328px"></div>
<div class="a ib" style="left:532px;top:363px;width:96px;height:24px"></div>
<div class="a ib" style="left:657px;top:363px;width:96px;height:24px"></div>
<div class="a cb" style="left:844px;top:368px"></div>
<div class="a cb" style="left:943px;top:368px"></div>
<div class="a ib" style="left:593px;top:403px;width:96px;height:24px"></div>
<svg style="left:200px;top:124px" width="886" height="602" viewBox="200 124 886 602" font-family="Liberation Sans">
<text x="254" y="134.9" font-size="13.4" fill="#000" textLength="88" lengthAdjust="spacing">Radiator height</text>
<text x="347.5" y="138.9" font-family="Liberation Serif" font-size="22" fill="#000" transform="translate(347.5 0) scale(0.85 1) translate(-347.5 0)">(</text>
<text x="353.7" y="136.0" font-family="Liberation Serif" font-size="16" font-style="italic" fill="#000" textLength="17.3" lengthAdjust="spacingAndGlyphs">rH</text>
<text x="371" y="141.20000000000002" font-family="Liberation Serif" font-size="12" font-style="italic" fill="#000" textLength="17.5" lengthAdjust="spacingAndGlyphs">cur</text>
<text x="390.3" y="138.9" font-family="Liberation Serif" font-size="22" fill="#000" transform="translate(390.3 0) scale(0.85 1) translate(-390.3 0)">)</text>
<text x="399.5" y="134.9" font-size="13.4" fill="#000">:</text>
<text x="535.8" y="140.0" font-family="Liberation Mono" font-size="13" fill="#3c3c3c">0.0807292</text>
<text x="660.8" y="140.0" font-family="Liberation Mono" font-size="13" fill="#3c3c3c">0.0246063</text>
<text x="635.4" y="141.5" font-family="Liberation Serif" font-size="16" font-style="italic" fill="#000" textLength="11" lengthAdjust="spacingAndGlyphs">ft</text>
<text x="760.3" y="141.6" font-family="Liberation Serif" font-size="16" font-style="italic" fill="#000" textLength="11" lengthAdjust="spacingAndGlyphs">m</text>
<text x="860" y="137.9" font-size="11" fill="#111" textLength="67.5" lengthAdjust="spacing">Use FPS value</text>
<text x="959" y="137.9" font-size="11" fill="#111" textLength="60" lengthAdjust="spacing">Use SI value</text>
<path d="M846.6 134.6 L849.4 137.8 L854.6 131.2" fill="none" stroke="#0a0a0a" stroke-width="2"/>
<text x="254" y="174.9" font-size="13.4" fill="#000" textLength="62.2" lengthAdjust="spacing">Tube width</text>
<text x="323.7" y="178.9" font-family="Liberation Serif" font-size="22" fill="#000" transform="translate(323.7 0) scale(0.85 1) translate(-323.7 0)">(</text>
<text x="330.7" y="176.0" font-family="Liberation Serif" font-size="16" font-style="italic" fill="#000" textLength="15" lengthAdjust="spacingAndGlyphs">tW</text>
<text x="347" y="181.20000000000002" font-family="Liberation Serif" font-size="12" font-style="italic" fill="#000" textLength="18.4" lengthAdjust="spacingAndGlyphs">cur</text>
<text x="366.5" y="178.9" font-family="Liberation Serif" font-size="22" fill="#000" transform="translate(366.5 0) scale(0.85 1) translate(-366.5 0)">)</text>
<text x="375.7" y="174.9" font-size="13.4" fill="#000">:</text>
<text x="535.8" y="180.0" font-family="Liberation Mono" font-size="13" fill="#3c3c3c">0.0807292</text>
<text x="660.8" y="180.0" font-family="Liberation Mono" font-size="13" fill="#3c3c3c">0.0246063</text>
<text x="635.4" y="181.5" font-family="Liberation Serif" font-size="16" font-style="italic" fill="#000" textLength="11" lengthAdjust="spacingAndGlyphs">ft</text>
<text x="760.3" y="181.6" font-family="Liberation Serif" font-size="16" font-style="italic" fill="#000" textLength="11" lengthAdjust="spacingAndGlyphs">m</text>
<text x="860" y="177.9" font-size="11" fill="#111" textLength="67.5" lengthAdjust="spacing">Use FPS value</text>
<text x="959" y="177.9" font-size="11" fill="#111" textLength="60" lengthAdjust="spacing">Use SI value</text>
<path d="M846.6 174.6 L849.4 177.8 L854.6 171.2" fill="none" stroke="#0a0a0a" stroke-width="2"/>
<text x="254" y="214.9" font-size="13.4" fill="#000" textLength="67.7" lengthAdjust="spacing">Tube height</text>
<text x="328.8" y="218.9" font-family="Liberation Serif" font-size="22" fill="#000" transform="translate(328.8 0) scale(0.85 1) translate(-328.8 0)">(</text>
<text x="335.4" y="216.0" font-family="Liberation Serif" font-size="16" font-style="italic" fill="#000" textLength="14.6" lengthAdjust="spacingAndGlyphs">tH</text>
<text x="350.8" y="221.20000000000002" font-family="Liberation Serif" font-size="12" font-style="italic" fill="#000" textLength="18.2" lengthAdjust="spacingAndGlyphs">cur</text>
<text x="370" y="218.9" font-family="Liberation Serif" font-size="22" fill="#000" transform="translate(370.0 0) scale(0.85 1) translate(-370.0 0)">)</text>
<text x="381" y="214.9" font-size="13.4" fill="#000">:</text>
<text x="535.8" y="220.0" font-family="Liberation Mono" font-size="13" fill="#3c3c3c">0.00512667</text>
<text x="660.8" y="220.0" font-family="Liberation Mono" font-size="13" fill="#3c3c3c">0.00156261</text>
<text x="635.4" y="221.5" font-family="Liberation Serif" font-size="16" font-style="italic" fill="#000" textLength="11" lengthAdjust="spacingAndGlyphs">ft</text>
<text x="760.3" y="221.6" font-family="Liberation Serif" font-size="16" font-style="italic" fill="#000" textLength="11" lengthAdjust="spacingAndGlyphs">m</text>
<text x="860" y="217.9" font-size="11" fill="#111" textLength="67.5" lengthAdjust="spacing">Use FPS value</text>
<text x="959" y="217.9" font-size="11" fill="#111" textLength="60" lengthAdjust="spacing">Use SI value</text>
<path d="M846.6 214.6 L849.4 217.8 L854.6 211.2" fill="none" stroke="#0a0a0a" stroke-width="2"/>
<text x="254" y="254.9" font-size="13.4" fill="#000" textLength="51" lengthAdjust="spacing">Fin width</text>
<text x="314.2" y="258.9" font-family="Liberation Serif" font-size="22" fill="#000" transform="translate(314.2 0) scale(0.85 1) translate(-314.2 0)">(</text>
<text x="320.8" y="256.0" font-family="Liberation Serif" font-size="16" font-style="italic" fill="#000" textLength="19" lengthAdjust="spacingAndGlyphs">fW</text>
<text x="340" y="261.2" font-family="Liberation Serif" font-size="12" font-style="italic" fill="#000" textLength="18" lengthAdjust="spacingAndGlyphs">cur</text>
<text x="358" y="258.9" font-family="Liberation Serif" font-size="22" fill="#000" transform="translate(358.0 0) scale(0.85 1) translate(-358.0 0)">)</text>
<text x="368.4" y="254.9" font-size="13.4" fill="#000">:</text>
<text x="535.8" y="260.0" font-family="Liberation Mono" font-size="13" fill="#3c3c3c">0.0807292</text>
<text x="660.8" y="260.0" font-family="Liberation Mono" font-size="13" fill="#3c3c3c">0.0246063</text>
<text x="635.4" y="261.5" font-family="Liberation Serif" font-size="16" font-style="italic" fill="#000" textLength="11" lengthAdjust="spacingAndGlyphs">ft</text>
<text x="760.3" y="261.6" font-family="Liberation Serif" font-size="16" font-style="italic" fill="#000" textLength="11" lengthAdjust="spacingAndGlyphs">m</text>
<text x="860" y="257.9" font-size="11" fill="#111" textLength="67.5" lengthAdjust="spacing">Use FPS value</text>
<text x="959" y="257.9" font-size="11" fill="#111" textLength="60" lengthAdjust="spacing">Use SI value</text>
<path d="M846.6 254.6 L849.4 257.8 L854.6 251.2" fill="none" stroke="#0a0a0a" stroke-width="2"/>
<text x="254" y="294.9" font-size="13.4" fill="#000" textLength="56.5" lengthAdjust="spacing">Fin height</text>
<text x="319" y="298.9" font-family="Liberation Serif" font-size="22" fill="#000" transform="translate(319.0 0) scale(0.85 1) translate(-319.0 0)">(</text>
<text x="325.5" y="296.0" font-family="Liberation Serif" font-size="16" font-style="italic" fill="#000" textLength="16.5" lengthAdjust="spacingAndGlyphs">fH</text>
<text x="342.7" y="301.2" font-family="Liberation Serif" font-size="12" font-style="italic" fill="#000" textLength="17.6" lengthAdjust="spacingAndGlyphs">cur</text>
<text x="362" y="298.9" font-family="Liberation Serif" font-size="22" fill="#000" transform="translate(362.0 0) scale(0.85 1) translate(-362.0 0)">)</text>
<text x="372" y="294.9" font-size="13.4" fill="#000">:</text>
<text x="535.8" y="300.0" font-family="Liberation Mono" font-size="13" fill="#3c3c3c">0.0389808</text>
<text x="660.8" y="300.0" font-family="Liberation Mono" font-size="13" fill="#3c3c3c">0.0118813</text>
<text x="635.4" y="301.5" font-family="Liberation Serif" font-size="16" font-style="italic" fill="#000" textLength="11" lengthAdjust="spacingAndGlyphs">ft</text>
<text x="760.3" y="301.59999999999997" font-family="Liberation Serif" font-size="16" font-style="italic" fill="#000" textLength="11" lengthAdjust="spacingAndGlyphs">m</text>
<text x="860" y="297.9" font-size="11" fill="#111" textLength="67.5" lengthAdjust="spacing">Use FPS value</text>
<text x="959" y="297.9" font-size="11" fill="#111" textLength="60" lengthAdjust="spacing">Use SI value</text>
<path d="M846.6 294.6 L849.4 297.8 L854.6 291.2" fill="none" stroke="#0a0a0a" stroke-width="2"/>
<text x="254" y="334.9" font-size="13.4" fill="#000" textLength="74.8" lengthAdjust="spacing">Fin thickness</text>
<text x="337.6" y="338.9" font-family="Liberation Serif" font-size="22" fill="#000" transform="translate(337.6 0) scale(0.85 1) translate(-337.6 0)">(</text>
<text x="343.8" y="336.0" font-family="Liberation Serif" font-size="16" font-style="italic" fill="#000" textLength="14.2" lengthAdjust="spacingAndGlyphs">fT</text>
<text x="358.5" y="341.2" font-family="Liberation Serif" font-size="12" font-style="italic" fill="#000" textLength="18.3" lengthAdjust="spacingAndGlyphs">cur</text>
<text x="377.5" y="338.9" font-family="Liberation Serif" font-size="22" fill="#000" transform="translate(377.5 0) scale(0.85 1) translate(-377.5 0)">)</text>
<text x="387.8" y="334.9" font-size="13.4" fill="#000">:</text>
<text x="535.8" y="340.0" font-family="Liberation Mono" font-size="13" fill="#3c3c3c">0.00008333</text>
<text x="660.8" y="340.0" font-family="Liberation Mono" font-size="13" fill="#3c3c3c">0.00002540</text>
<text x="635.4" y="341.5" font-family="Liberation Serif" font-size="16" font-style="italic" fill="#000" textLength="11" lengthAdjust="spacingAndGlyphs">ft</text>
<text x="760.3" y="341.59999999999997" font-family="Liberation Serif" font-size="16" font-style="italic" fill="#000" textLength="11" lengthAdjust="spacingAndGlyphs">m</text>
<text x="860" y="337.9" font-size="11" fill="#111" textLength="67.5" lengthAdjust="spacing">Use FPS value</text>
<text x="959" y="337.9" font-size="11" fill="#111" textLength="60" lengthAdjust="spacing">Use SI value</text>
<path d="M846.6 334.6 L849.4 337.8 L854.6 331.2" fill="none" stroke="#0a0a0a" stroke-width="2"/>
<text x="254" y="374.9" font-size="13.4" fill="#000" textLength="132" lengthAdjust="spacing">Distance Between Fins</text>
<text x="395" y="378.9" font-family="Liberation Serif" font-size="22" fill="#000" transform="translate(395.0 0) scale(0.85 1) translate(-395.0 0)">(</text>
<text x="401.3" y="376.0" font-family="Liberation Serif" font-size="16" font-style="italic" fill="#000" textLength="17.6" lengthAdjust="spacingAndGlyphs">fD</text>
<text x="418.9" y="381.2" font-family="Liberation Serif" font-size="12" font-style="italic" fill="#000" textLength="18.3" lengthAdjust="spacingAndGlyphs">cur</text>
<text x="438" y="378.9" font-family="Liberation Serif" font-size="22" fill="#000" transform="translate(438.0 0) scale(0.85 1) translate(-438.0 0)">)</text>
<text x="448.2" y="374.9" font-size="13.4" fill="#000">:</text>
<text x="535.8" y="380.0" font-family="Liberation Mono" font-size="13" fill="#3c3c3c">0.00520833</text>
<text x="660.8" y="380.0" font-family="Liberation Mono" font-size="13" fill="#3c3c3c">0.00158750</text>
<text x="635.4" y="381.5" font-family="Liberation Serif" font-size="16" font-style="italic" fill="#000" textLength="11" lengthAdjust="spacingAndGlyphs">ft</text>
<text x="760.3" y="381.59999999999997" font-family="Liberation Serif" font-size="16" font-style="italic" fill="#000" textLength="11" lengthAdjust="spacingAndGlyphs">m</text>
<text x="860" y="377.9" font-size="11" fill="#111" textLength="67.5" lengthAdjust="spacing">Use FPS value</text>
<text x="959" y="377.9" font-size="11" fill="#111" textLength="60" lengthAdjust="spacing">Use SI value</text>
<path d="M846.6 374.6 L849.4 377.8 L854.6 371.2" fill="none" stroke="#0a0a0a" stroke-width="2"/>
<text x="254" y="414.9" font-size="13.4" fill="#000" textLength="95.3" lengthAdjust="spacing">Number of tubes</text>
<text x="356.3" y="418.9" font-family="Liberation Serif" font-size="22" fill="#000" transform="translate(356.3 0) scale(0.85 1) translate(-356.3 0)">(</text>
<text x="362" y="416.0" font-family="Liberation Serif" font-size="16" font-style="italic" fill="#000" textLength="35" lengthAdjust="spacingAndGlyphs">ntube</text>
<text x="397" y="421.2" font-family="Liberation Serif" font-size="12" font-style="italic" fill="#000" textLength="18.2" lengthAdjust="spacingAndGlyphs">cur</text>
<text x="416.7" y="418.9" font-family="Liberation Serif" font-size="22" fill="#000" transform="translate(416.7 0) scale(0.85 1) translate(-416.7 0)">)</text>
<text x="427" y="414.9" font-size="13.4" fill="#000">:</text>
<text x="596.8" y="420" font-family="Liberation Mono" font-size="13" fill="#3c3c3c">33.</text>
<text x="253" y="478.8" font-size="13.4" fill="#000" textLength="385" lengthAdjust="spacing">Testing this radiator design under different coolant flow and air flow</text>
<text x="253" y="495.7" font-size="13.4" fill="#000" textLength="403.6" lengthAdjust="spacing">conditions yielded the following graph of heat transfer performance vs.</text>
<text x="253" y="512.6" font-size="13.4" fill="#000" textLength="250" lengthAdjust="spacing">coolant flow rate at different airflow speeds.</text>
<text x="253.3" y="559" font-size="13.4" fill="#000" textLength="175.7" lengthAdjust="spacing">A heat transfer performance of</text>
<text x="433.4" y="559" font-family="Liberation Serif" font-size="16" fill="#000" textLength="30.8" lengthAdjust="spacingAndGlyphs">4025</text>
<text x="484.4" y="549.8" font-family="Liberation Serif" font-size="16" font-style="italic" fill="#000" textLength="22" lengthAdjust="spacingAndGlyphs">Btu</text>
<path d="M471.2 554.3 H520.6" stroke="#000" stroke-width="1"/>
<text x="474.5" y="569.1" font-family="Liberation Serif" font-size="16" font-style="italic" fill="#000" textLength="42.9" lengthAdjust="spacingAndGlyphs">minute</text>
<text x="527.2" y="559" font-size="13.4" fill="#000" textLength="121" lengthAdjust="spacing">was obtained using a</text>
<text x="253" y="587.5" font-size="13.4" fill="#000" textLength="347" lengthAdjust="spacing">coolant volumetric flow, air volumetric flow and air velocity of</text>
<text x="253.8" y="621.3" font-family="Liberation Serif" font-size="16" fill="#000" textLength="14.4" lengthAdjust="spacingAndGlyphs">30</text>
<text x="274.2" y="621.3" font-family="Liberation Serif" font-size="16" font-style="italic" fill="#000" textLength="29.7" lengthAdjust="spacingAndGlyphs">gpm,</text>
<text x="309.1" y="621.3" font-family="Liberation Serif" font-size="16" fill="#000" textLength="31.4" lengthAdjust="spacingAndGlyphs">2349</text>
<text x="362.5" y="614.6" font-family="Liberation Serif" font-size="16" font-style="italic" fill="#000" textLength="11" lengthAdjust="spacingAndGlyphs">ft</text>
<text x="373" y="604.7" font-family="Liberation Serif" font-size="12" fill="#000" textLength="4.6" lengthAdjust="spacingAndGlyphs">3</text>
<path d="M347.1 617.3 H396.5 M428.4 617.3 H451.5" stroke="#000" stroke-width="1"/>
<text x="350.4" y="632.1" font-family="Liberation Serif" font-size="16" font-style="italic" fill="#000" textLength="42.9" lengthAdjust="spacingAndGlyphs">minute</text>
<text x="398.5" y="621.3" font-family="Liberation Serif" font-size="16" fill="#000">,</text>
<text x="407.5" y="621.3" font-family="Liberation Serif" font-size="16" fill="#000" textLength="14" lengthAdjust="spacingAndGlyphs">10</text>
<text x="431.3" y="613" font-family="Liberation Serif" font-size="16" font-style="italic" fill="#000" textLength="15.3" lengthAdjust="spacingAndGlyphs">mi</text>
<text x="435.6" y="632.1" font-family="Liberation Serif" font-size="16" font-style="italic" fill="#000" textLength="7.7" lengthAdjust="spacingAndGlyphs">h</text>
<text x="452.6" y="621.3" font-family="Liberation Serif" font-size="16" fill="#000">,</text>
<text x="462.4" y="621" font-size="13.4" fill="#000" textLength="70.8" lengthAdjust="spacing">respectively.</text>
<text x="254" y="667.3" font-size="13.4" fill="#000" textLength="282.7" lengthAdjust="spacing">These results are summarized in the table below.</text>
</svg>
<svg style="left:200px;top:124px" width="904" height="620" viewBox="200 124 904 620">
 <rect x="1086" y="124" width="17" height="602" fill="#fff"/>
 <path d="M1086.5 124 V726" stroke="#d4d4d4"/>
 <path d="M1086.5 140.5 H1103 M1086.5 709.5 H1103" stroke="#c8c8c8"/>
 <rect x="1087" y="493.5" width="15.6" height="93" fill="#dcdcdc" stroke="#9a9a9a" stroke-width="1"/>
 <path d="M1091 536.2 H1098 M1091 539.9 H1098 M1091 543.6 H1098" stroke="#555" stroke-width="1.4"/>
 <path d="M1091.2 135 L1094.8 131.2 L1098.4 135" fill="none" stroke="#555" stroke-width="1.2"/>
 <path d="M1091.2 715.6 L1094.8 719.4 L1098.4 715.6" fill="none" stroke="#555" stroke-width="1.2"/>
 <!-- hscroll -->
 <rect x="201" y="726" width="885" height="17" fill="#fff"/>
 <path d="M201 726.5 H1086" stroke="#c8c8c8"/>
 <rect x="217.5" y="727" width="848.5" height="16" fill="#dcdcdc"/>
 <path d="M217.5 727 V743 M1066.5 727 V743" stroke="#a0a0a0"/>
 <path d="M638.4 731 V738.6 M642.2 731 V738.6 M646 731 V738.6" stroke="#555" stroke-width="1.4"/>
 <path d="M211.4 731 L207.6 734.8 L211.4 738.6" fill="none" stroke="#555" stroke-width="1.2"/>
 <path d="M1075.8 731 L1079.6 734.8 L1075.8 738.6" fill="none" stroke="#555" stroke-width="1.2"/>
 <path d="M1069.5 727 V743 M1085.5 727 V743" stroke="#d0d0d0"/>
 <rect x="1086" y="726" width="17" height="17" fill="#f0f0f0"/>
</svg>
<!-- CHART -->
<svg style="left:660px;top:470px" width="426" height="256" viewBox="660 470 426 256" font-family="Liberation Sans" overflow="hidden">
 <g stroke="#6c6c6c" stroke-width="1.3" fill="none">
  <path d="M738 492.2 H1065.3 M738 548.6 H1065.3 M738 605.1 H1065.3 M738 664 H1065.3 M738 722.6 H1065.3"/>
  <path d="M776.2 492.2 V726 M818.2 492.2 V726 M858.9 492.2 V726 M900.7 492.2 V726 M940.8 492.2 V726 M981.8 492.2 V726 M1022.8 492.2 V726 M1064.7 492.2 V726"/>
 </g>
 <path d="M737.8 487.3 V726" stroke="#000" stroke-width="3.6"/>
 <path d="M767.8 636.5 L777.5 628.2 L787.1 620.3 L796.8 612.9 L806.5 605.8 L816.1 599.2 L825.8 593.0 L835.5 587.2 L845.1 581.7 L854.8 576.5 L864.5 571.7 L874.1 567.2 L883.8 563.1 L893.5 559.2 L903.1 555.5 L912.8 552.2 L922.5 549.0 L932.1 546.1 L941.8 543.4 L951.5 540.9 L961.1 538.6 L970.8 536.5 L980.5 534.5 L990.1 532.7 L999.8 531.0 L1009.5 529.3 L1019.1 527.8 L1028.8 526.4" fill="none" stroke="#8a2128" stroke-width="3" stroke-linejoin="round"/>
 <path d="M767.3 688.5 L777.0 681.1 L786.7 674.1 L796.4 667.5 L806.0 661.3 L815.7 655.4 L825.4 649.9 L835.1 644.7 L844.8 639.9 L854.5 635.3 L864.2 631.0 L873.8 627.1 L883.5 623.3 L893.2 619.9 L902.9 616.6 L912.6 613.6 L922.3 610.9 L931.9 608.3 L941.6 605.9 L951.3 603.6 L961.0 601.6 L970.7 599.7 L980.4 597.9 L990.1 596.2 L999.7 594.6 L1009.4 593.2 L1019.1 591.8 L1028.8 590.5" fill="none" stroke="#2566a6" stroke-width="3" stroke-linejoin="round"/>
 <path d="M784.0 728.0 L793.2 723.3 L802.4 718.8 L811.6 714.4 L820.7 710.2 L829.9 706.2 L839.1 702.3 L848.3 698.6 L857.5 695.1 L866.7 691.7 L875.9 688.5 L885.0 685.4 L894.2 682.5 L903.4 679.7 L912.6 677.0 L921.8 674.6 L931.0 672.2 L940.1 670.0 L949.3 667.9 L958.5 666.0 L967.7 664.2 L976.9 662.5 L986.1 661.0 L995.3 659.6 L1004.4 658.3 L1013.6 657.1 L1022.8 656.0 L1032.0 655.1" fill="none" stroke="#3c3c3c" stroke-width="3" stroke-linejoin="round"/>
 <g font-weight="bold" font-size="10.5" fill="#111" stroke="#111" stroke-width="0.55">
  <text x="1037.6" y="530.9" textLength="37.7" lengthAdjust="spacingAndGlyphs">15 MPH</text>
  <text x="1037.6" y="593.3" textLength="37.7" lengthAdjust="spacingAndGlyphs">10 MPH</text>
  <text x="1037.6" y="659.6" textLength="31.6" lengthAdjust="spacingAndGlyphs">5 MPH</text>
  <text x="708" y="553.4" textLength="23.7" lengthAdjust="spacingAndGlyphs">5000</text>
  <text x="708" y="609.9" textLength="23.7" lengthAdjust="spacingAndGlyphs">4000</text>
  <text x="708" y="668.8" textLength="23.7" lengthAdjust="spacingAndGlyphs">3000</text>
  <text x="708" y="727.4" textLength="23.7" lengthAdjust="spacingAndGlyphs">2000</text>
  <text transform="translate(682.4 722) rotate(-90)" font-size="13" textLength="207.6" lengthAdjust="spacingAndGlyphs" stroke-width="0.75">Transfer Performance (BTU/min)</text>
 </g>
</svg>
<!-- RIGHT PANEL -->
<svg style="left:1104px;top:124px" width="262" height="130" viewBox="1104 124 262 130" font-family="Liberation Sans">
 <text x="1110.6" y="143.4" font-size="21" font-weight="bold" fill="#111" textLength="237.5" lengthAdjust="spacing">Original Radiator Model</text>
 <text x="1354.6" y="143.4" font-size="21" font-weight="bold" fill="#111">D</text>
 <path d="M1111 180.5 H1366" stroke="#b4b4b4"/>
 <text x="1115.5" y="176.4" font-size="12" fill="#1a1a1a" textLength="38.3" lengthAdjust="spacing">Insertar</text>
 <text x="1115.5" y="195.5" font-size="12" fill="#1a1a1a" textLength="59" lengthAdjust="spacing">Convertir A</text>
 <text x="1115.5" y="214.6" font-size="12" fill="#1a1a1a" textLength="41.4" lengthAdjust="spacing">Ejecutar</text>
 <text x="1115.5" y="233.7" font-size="12" fill="#1a1a1a" textLength="44.1" lengthAdjust="spacing">Formato</text>
</svg>
<!-- STATUS BAR -->
<div class="a" style="left:8px;top:752px;width:7px;height:7px;border-radius:50%;background:#000"></div>
<div class="a" style="left:779px;top:748px;width:13px;height:13px;background:#fff;border:1px solid #6a6a6a"></div>
<svg style="left:0;top:744px" width="1366" height="21" viewBox="0 744 1366 21" font-family="Liberation Sans" font-size="11" fill="#111">
 <text x="20.5" y="758.8" textLength="21.3" lengthAdjust="spacing">Listo</text>
 <path d="M781.6 754.6 L784.4 757.8 L789.6 751.2" fill="none" stroke="#0a0a0a" stroke-width="2"/>
 <text x="795.5" y="758.8" textLength="37.2" lengthAdjust="spacing">Editable</text>
 <text x="844" y="758.8" textLength="148.6" lengthAdjust="spacing">Perfil de Maple Predeterminado</text>
 <text x="1003.2" y="758.8" textLength="39.7" lengthAdjust="spacing">T:\jrubio</text>
 <text x="1052.3" y="758.8" textLength="77.1" lengthAdjust="spacing">Memoria: 4.18M</text>
 <text x="1138.5" y="758.8" textLength="67.8" lengthAdjust="spacing">Tiempo: 0.09s</text>
 <text x="1215.7" y="758.8" textLength="61.6" lengthAdjust="spacing">Zoom: 100%</text>
 <text x="1286.2" y="758.8" textLength="72.1" lengthAdjust="spacing">Modo de Texto</text>
</svg>
<div class="a" style="left:0;top:764px;width:1366px;height:1px;background:#fafafa"></div>
<div class="a" style="left:0;top:765px;width:1366px;height:2px;background:#363636"></div>
<div class="a" style="left:221px;top:765px;width:36px;height:2px;background:#5c5c5c"></div>
</div></body></html>
